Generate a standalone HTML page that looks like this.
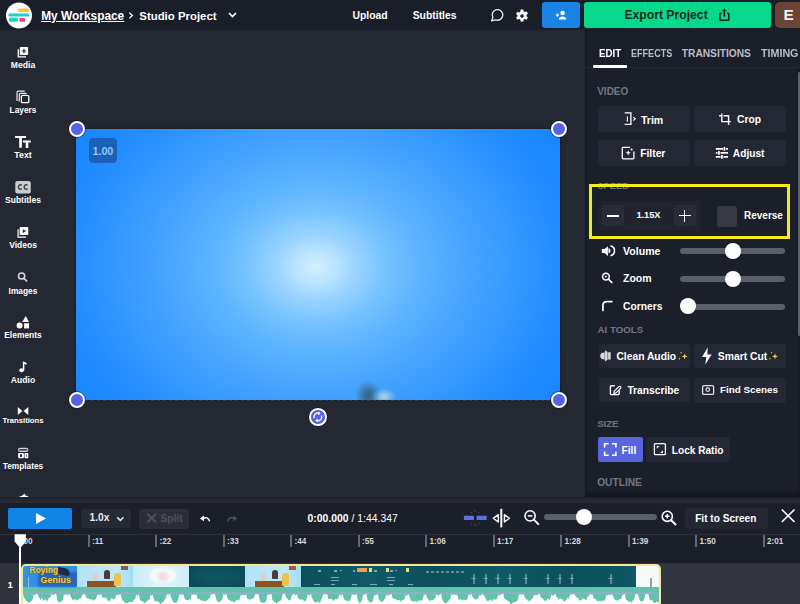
<!DOCTYPE html>
<html><head><meta charset="utf-8">
<style>
*{margin:0;padding:0;box-sizing:border-box}
html,body{width:800px;height:604px;overflow:hidden;background:#242833;font-family:"Liberation Sans",sans-serif;color:#fff}
.abs{position:absolute}
#hdr{left:0;top:0;width:800px;height:30px;background:#1a1e29}
.t{position:absolute;white-space:nowrap;font-weight:bold;line-height:1}
#side{left:0;top:30px;width:46px;height:470px}
.si{position:absolute;left:0;width:46px;text-align:center;font-size:9px;font-weight:bold;color:#fff;line-height:1;white-space:nowrap}
#canvas{left:76px;top:129px;width:484px;height:271px;box-shadow:0 0 0 1.5px #1c2029;background:radial-gradient(ellipse 300px 240px at 240px 138px,#d4f0ff 0%,#bce5ff 6%,#9cd5ff 13%,#78c3ff 23%,#5cb3ff 35%,#46a4ff 52%,#2f95ff 70%,#1f89ff 86%,#1884ff 100%)}
.hd{position:absolute;width:16px;height:16px;border-radius:50%;background:#5862e4;border:2px solid #fff;box-shadow:0 0 0 1px rgba(10,12,20,.45)}
#rp{left:585px;top:30px;width:215px;height:467px;background:#1b1f2a}
.btn{position:absolute;background:#242834;border-radius:3px}
.lbl{position:absolute;font-size:10.5px;font-weight:bold;color:#737782;line-height:1;white-space:nowrap}
#tb{left:0;top:503px;width:800px;height:31px;background:#1b1f2a}
#ruler{left:0;top:534px;width:800px;height:29px;background:#1b1f2a}
#track{left:0;top:563px;width:800px;height:41px;background:#32353f}
</style></head><body>
<div id="hdr" class="abs">
  <svg class="abs" style="left:5px;top:2px" width="28" height="27" viewBox="0 0 28 27">
    <circle cx="14" cy="13.5" r="13" fill="#fff"/>
    <rect x="13.2" y="6.6" width="11" height="3.4" rx=".8" fill="#f6c343"/>
    <rect x="3.5" y="11.6" width="20.7" height="3" rx=".8" fill="#1ecfc9"/>
    <rect x="4.2" y="15.8" width="8.6" height="4" rx=".8" fill="#1ecfc9"/>
    <rect x="14.5" y="16.1" width="5.5" height="3.7" rx=".8" fill="#ec3f77"/>
  </svg>
  <div class="t" style="left:41.2px;top:11px;font-size:11.9px;text-decoration:underline">My Workspace</div>
  <svg class="abs" style="left:127px;top:11px" width="8" height="9" viewBox="0 0 8 9"><path d="M2.3 1.6L5.4 4.5L2.3 7.4" stroke="#fff" stroke-width="1.3" fill="none"/></svg>
  <div class="t" style="left:139.3px;top:10.6px;font-size:11.4px">Studio Project</div>
  <svg class="abs" style="left:228px;top:12px" width="9" height="6" viewBox="0 0 9 6"><path d="M1 1l3.5 3.5L8 1" stroke="#fff" stroke-width="1.6" fill="none"/></svg>
  <div class="t" style="left:352.5px;top:11px;font-size:10.35px">Upload</div>
  <div class="t" style="left:412.7px;top:11px;font-size:10.4px">Subtitles</div>
  <div class="abs" style="left:542px;top:2px;width:38px;height:26px;background:#1a83e3;border-radius:3px"></div>
  <div class="abs" style="left:584px;top:2px;width:187px;height:26px;background:#06d98b;border-radius:3px"></div>
  <div class="t" style="left:624.4px;top:8.8px;font-size:12.2px;color:#0d2a1c">Export Project</div>
  <svg class="abs" style="left:489px;top:7px" width="17" height="17" viewBox="0 0 17 17"><path d="M2.6 13.8 L3.91 10.55 A5.3 5.3 0 1 1 6.51 12.81 Z" fill="none" stroke="#e6e8ec" stroke-width="1.3" stroke-linejoin="round"/></svg>
  <svg class="abs" style="left:514px;top:7.5px" width="16" height="16" viewBox="0 0 16 16"><path fill="#fff" fill-rule="evenodd" d="M6.7 1.6h2.6l.4 1.9 1.1.6 1.8-.7 1.3 2.2-1.4 1.3v1.3l1.4 1.3-1.3 2.2-1.8-.7-1.1.6-.4 1.9H6.7l-.4-1.9-1.1-.6-1.8.7-1.3-2.2 1.4-1.3V7.2L2.1 5.9l1.3-2.2 1.8.7 1.1-.6zM8 6.3a1.8 1.8 0 1 0 0 3.6 1.8 1.8 0 0 0 0-3.6z"/></svg>
  <svg class="abs" style="left:554px;top:9px" width="16" height="12" viewBox="0 0 16 12"><circle cx="8.6" cy="4" r="2.3" fill="#fff"/><path d="M4.9 10.4c0-1.9 1.7-3 3.7-3s3.7 1.1 3.7 3z" fill="#fff"/><path d="M3.5 4.5v3.2M1.9 6.1h3.2" stroke="#fff" stroke-width="1.3"/></svg>
  <svg class="abs" style="left:717px;top:6px" width="14" height="16" viewBox="0 0 14 16"><path d="M4.6 7.4H3.6Q2.9 7.4 2.9 8.1V13.6Q2.9 14.3 3.6 14.3H11.1Q11.8 14.3 11.8 13.6V8.1Q11.8 7.4 11.1 7.4H10.1M7.35 10.6V4" fill="none" stroke="#0c2417" stroke-width="1.6"/><path d="M4.9 5.2L7.35 2.5L9.8 5.2Z" fill="#0c2417"/></svg>
  <div class="abs" style="left:775.3px;top:2.2px;width:30px;height:25.6px;background:#6a4535;border-radius:5px"></div>
  <div class="t" style="left:783.4px;top:6.9px;font-size:15.4px;color:#f3eeea">E</div>
</div>

<div id="canvas" class="abs">
  <div class="abs" style="left:13px;top:9px;width:28px;height:25px;background:#1a61b9;border-radius:4px"></div>
  <div class="t" style="left:16.5px;top:17.2px;font-size:10.7px;color:#93c6f5">1.00</div>
</div>
<div class="abs" style="left:76px;top:129px;width:484px;height:271px;overflow:hidden">
<div class="abs" style="left:278px;top:248px;width:26px;height:30px;background:radial-gradient(ellipse 50% 50% at 55% 62%,rgba(52,82,105,.9),rgba(60,100,135,.55) 55%,rgba(80,140,200,0) 100%);filter:blur(1.2px)"></div>
<div class="abs" style="left:296px;top:254px;width:24px;height:18px;background:radial-gradient(ellipse 50% 45% at 50% 75%,rgba(215,230,205,.85),rgba(190,220,230,.35) 60%,rgba(150,200,240,0) 100%);filter:blur(1px)"></div>
</div>
<div class="abs" style="left:76px;top:399.5px;width:484px;height:1.5px;background:repeating-linear-gradient(90deg,#1a2330 0 3px,#2f3a48 3px 6px)"></div>
<div class="hd" style="left:68.6px;top:120.6px"></div>
<div class="hd" style="left:551.3px;top:120.6px"></div>
<div class="hd" style="left:68.6px;top:391.9px"></div>
<div class="hd" style="left:551.3px;top:391.9px"></div>
<div class="hd" style="left:309.2px;top:408.2px;width:17.4px;height:17.4px;border-width:2px"></div>

<div id="rp" class="abs">
  <div class="abs" style="left:0;top:0;width:2px;height:467px;background:#161a23"></div>
  <div class="abs" style="left:0;top:37px;width:215px;height:1px;background:#232732"></div>
  <div class="t" style="left:14px;top:18.9px;font-size:10.2px;transform:scaleX(.96);transform-origin:0 0">EDIT</div>
  <div class="abs" style="left:8px;top:34.5px;width:34px;height:3px;background:#fff;border-radius:1px"></div>
  <div class="t" style="left:46.2px;top:18.9px;font-size:10.2px;color:#b9bdc6;transform:scaleX(.89);transform-origin:0 0">EFFECTS</div>
  <div class="t" style="left:96.8px;top:18.9px;font-size:10.2px;color:#b9bdc6">TRANSITIONS</div>
  <div class="t" style="left:175.6px;top:18.9px;font-size:10.2px;color:#b9bdc6;transform:scaleX(1.05);transform-origin:0 0">TIMING</div>
  <div class="abs" style="left:211.5px;top:38px;width:3.5px;height:429px;background:#181b25"></div>
  <div class="abs" style="left:213.3px;top:42px;width:1.7px;height:264px;background:#5c606a;border-radius:1px"></div>

  <div class="lbl" style="left:12.2px;top:57.1px;font-size:10px">VIDEO</div>
  <div class="btn" style="left:13px;top:76px;width:92px;height:26px"></div>
  <div class="btn" style="left:109px;top:76px;width:92px;height:26px"></div>
  <div class="btn" style="left:13px;top:110px;width:92px;height:26px"></div>
  <div class="btn" style="left:109px;top:110px;width:92px;height:26px"></div>
  <div class="t" style="left:55.89999999999998px;top:85.3px;font-size:10.6px">Trim</div>
  <div class="t" style="left:152.0px;top:85.3px;font-size:10.3px">Crop</div>
  <div class="t" style="left:55.200000000000045px;top:119.4px;font-size:10.3px">Filter</div>
  <div class="t" style="left:147.79999999999995px;top:119.4px;font-size:10.2px">Adjust</div>

  <div class="lbl" style="left:12.4px;top:152px;font-size:9.3px">SPEED</div>
  <div class="abs" style="left:13.5px;top:170.5px;width:101px;height:30px;background:#21242e;border-radius:3px"></div>
  <div class="abs" style="left:16.5px;top:175px;width:22px;height:21px;background:#292c36;border-radius:3px"></div>
  <div class="abs" style="left:88.5px;top:175px;width:22px;height:21px;background:#292c36;border-radius:3px"></div>
  <div class="abs" style="left:21.5px;top:184.5px;width:12px;height:2px;background:#fff"></div>
  <div class="abs" style="left:93.5px;top:184.6px;width:12px;height:1.9px;background:#fff"></div>
  <div class="abs" style="left:98.55px;top:179.6px;width:1.9px;height:12px;background:#fff"></div>
  <div class="t" style="left:51.4px;top:181.4px;font-size:9.2px">1.15X</div>
  <div class="abs" style="left:132px;top:175.5px;width:20px;height:21px;background:#373a45;border-radius:3px"></div>
  <div class="t" style="left:159.0px;top:180.9px;font-size:10px">Reverse</div>
  <div class="abs" style="left:4px;top:154px;width:201px;height:55px;border:3px solid #f5ec1c"></div>

  <div class="t" style="left:38.0px;top:215.9px;font-size:10.6px">Volume</div>
  <div class="t" style="left:38.0px;top:243px;font-size:10.5px">Zoom</div>
  <div class="t" style="left:38.0px;top:271.6px;font-size:10.3px">Corners</div>
  <div class="abs" style="left:95px;top:218px;width:105px;height:6px;background:#5b5f6b;border-radius:3px"></div>
  <div class="abs" style="left:95px;top:245.5px;width:105px;height:6px;background:#5b5f6b;border-radius:3px"></div>
  <div class="abs" style="left:95px;top:273.5px;width:105px;height:6px;background:#5b5f6b;border-radius:3px"></div>
  <div class="abs" style="left:139.6px;top:213.4px;width:16px;height:16px;background:#fff;border-radius:50%"></div>
  <div class="abs" style="left:139.6px;top:240.6px;width:16px;height:16px;background:#fff;border-radius:50%"></div>
  <div class="abs" style="left:94.6px;top:267.9px;width:16px;height:16px;background:#fff;border-radius:50%"></div>

  <div class="lbl" style="left:12.6px;top:294.9px;font-size:9.7px">AI TOOLS</div>
  <div class="btn" style="left:13.5px;top:314px;width:91.5px;height:24px"></div>
  <div class="btn" style="left:109px;top:313.5px;width:91.5px;height:24.5px"></div>
  <div class="btn" style="left:13.5px;top:348px;width:91.5px;height:24px"></div>
  <div class="btn" style="left:109px;top:347.5px;width:91.5px;height:25px"></div>
  <div class="t" style="left:31.399999999999977px;top:321.8px;font-size:10.3px">Clean Audio</div>
  <div class="t" style="left:132.79999999999995px;top:322.3px;font-size:10.35px">Smart Cut</div>
  <div class="t" style="left:42.39999999999998px;top:355.6px;font-size:10.26px">Transcribe</div>
  <div class="t" style="left:134.89999999999998px;top:354.8px;font-size:9.9px">Find Scenes</div>

  <div class="lbl" style="left:12.2px;top:389.2px;font-size:9.6px">SIZE</div>
  <div class="abs" style="left:12.5px;top:407px;width:45.5px;height:25px;background:#5865df;border-radius:2px"></div>
  <div class="btn" style="left:61.3px;top:407px;width:83.5px;height:25px"></div>
  <div class="t" style="left:36.5px;top:415.5px;font-size:10.2px">Fill</div>
  <div class="t" style="left:86.79999999999995px;top:415.5px;font-size:10.1px">Lock Ratio</div>
  <div class="lbl" style="left:12.2px;top:448.4px;font-size:10.2px">OUTLINE</div>
  <div class="abs" style="left:0;top:459px;width:215px;height:8px;background:linear-gradient(rgba(18,20,27,0),#11141b)"></div>
</div>
<div id="side" class="abs" style="top:0;height:500px">
  <svg class="abs" style="left:0;top:0" width="46" height="500" viewBox="0 0 46 500">
    <g fill="#fff">
      <path d="M18.3 49.2V56.9H26" fill="none" stroke="#fff" stroke-width="1.3"/>
      <rect x="19.8" y="46.9" width="8.3" height="8.2" rx="1"/>
      <path d="M23.95 48.7v4.6M21.65 51h4.6" stroke="#242833" stroke-width="1.2"/>
      <path d="M17 101V92.5Q17 91.2 18.3 91.2H24.8" fill="none" stroke="#e8e9ec" stroke-width="1.2"/>
      <path d="M19.3 101.5V94.6Q19.3 93.4 20.5 93.4H26.5" fill="none" stroke="#e8e9ec" stroke-width="1.2"/>
      <rect x="21.4" y="95.4" width="7.4" height="7.2" rx="1.2" fill="#242833" stroke="#fff" stroke-width="1.3"/>
      <path d="M15 135.9H26V138.1H21.9V147.8H19.2V138.1H15Z"/>
      <path d="M23 140.4H30.8V142.4H28.3V148.1H25.7V142.4H23Z"/>
      <rect x="15.3" y="180.9" width="15.5" height="12.5" rx="2" fill="#c9ccd1"/>
      <path d="M21.9 185.2A2.2 2.2 0 1 0 21.9 188.8M27.6 185.2A2.2 2.2 0 1 0 27.6 188.8" fill="none" stroke="#3a3d45" stroke-width="1.4"/>
      <path d="M18.1 229.2V237.2H26" fill="none" stroke="#fff" stroke-width="1.2"/>
      <rect x="19.6" y="227.1" width="8.7" height="8" rx="1"/>
      <path d="M22.9 229.3L26.1 231.1L22.9 232.9Z" fill="#242833"/>
      <circle cx="21.6" cy="276" r="3.1" fill="none" stroke="#d8dade" stroke-width="1.5"/>
      <path d="M23.8 278.2L26.6 281" stroke="#d8dade" stroke-width="1.7" stroke-linecap="round"/>
      <path d="M25.7 315.9L29 321.9H22.3Z"/>
      <circle cx="19.6" cy="325.4" r="3"/>
      <rect x="24.1" y="323.3" width="4.9" height="5.1"/>
      <path d="M23.6 370.3V362.4Q25.7 362.9 26.4 364.3" fill="none" stroke="#fff" stroke-width="1.5"/>
      <ellipse cx="21.5" cy="370.2" rx="2.3" ry="2"/>
      <path d="M17.8 406.9L22.4 410.9L17.8 414.9Z"/>
      <path d="M28.3 406.9L23.7 410.9L28.3 414.9Z"/>
      <rect x="18.6" y="448.4" width="9.2" height="3" rx="1.4" fill="#454852" stroke="#d0d3d8" stroke-width="1.1"/>
      <rect x="18.1" y="452.9" width="5.8" height="5.4" rx="1"/><rect x="19.9" y="454.3" width="2.2" height="2.6" fill="#242833"/>
      <rect x="24.5" y="452.9" width="3.8" height="5.4" rx=".8"/><rect x="25.9" y="454.3" width="1" height="2.6" fill="#6a6d75"/>
      <path d="M17.2 498.6Q19.5 496.3 22.5 495.6L24.4 493.5L25.6 495.6L28.9 496.4L25.2 497.6L24.8 498.8H18Z"/>
    </g>
  </svg>
  <div class="si" style="top:61.1px;font-size:8.6px">Media</div>
  <div class="si" style="top:105.8px;font-size:8.3px">Layers</div>
  <div class="si" style="top:150.6px;font-size:8.8px">Text</div>
  <div class="si" style="top:195.8px;font-size:8.5px">Subtitles</div>
  <div class="si" style="top:240.9px;font-size:8.5px">Videos</div>
  <div class="si" style="top:286.5px;font-size:8.4px">Images</div>
  <div class="si" style="top:331.3px;font-size:8.45px">Elements</div>
  <div class="si" style="top:375.7px;font-size:8.6px">Audio</div>
  <div class="si" style="top:417.1px;font-size:7.7px">Transitions</div>
  <div class="si" style="top:462.1px;font-size:8.3px">Templates</div>
</div>
<div class="abs" style="left:0;top:497px;width:800px;height:1.5px;background:#1f222b"></div>
<div class="abs" style="left:0;top:498.5px;width:800px;height:4.5px;background:#272a34"></div>
<div id="tb" class="abs">
  <div class="abs" style="left:7.5px;top:4.8px;width:64.5px;height:21.2px;background:#1184e6;border-radius:2px"></div>
  <svg class="abs" style="left:35px;top:9px" width="12" height="13" viewBox="0 0 12 13"><path d="M1 1L11 6.5L1 12Z" fill="#fff"/></svg>
  <div class="abs" style="left:80.5px;top:6px;width:50px;height:19px;background:#262a35;border-radius:3px"></div>
  <div class="t" style="left:89.6px;top:10px;font-size:10.2px;color:#e8e9ec">1.0x</div>
  <svg class="abs" style="left:116px;top:515px" width="8" height="5"></svg>
  <div class="abs" style="left:139px;top:6px;width:50px;height:19.5px;background:#2b2e37;border-radius:3px"></div>
  <div class="t" style="left:160.3px;top:10.5px;font-size:10.3px;color:#4d515b">Split</div>
  <div class="t" style="left:307.6px;top:11.1px;font-size:10.4px">0:00.000 <span style="font-weight:normal">/ 1:44.347</span></div>
  <div class="abs" style="left:544px;top:11px;width:113px;height:5.5px;background:#5b5f6b;border-radius:3px"></div>
  <div class="abs" style="left:576px;top:6.3px;width:16px;height:16px;background:#fff;border-radius:50%"></div>
  <div class="abs" style="left:685px;top:5.2px;width:83px;height:20.5px;background:#242731;border-radius:3px"></div>
  <div class="t" style="left:695.2px;top:11px;font-size:10.1px">Fit to Screen</div>
</div>
<div id="ruler" class="abs">
  <div class="abs" style="left:0;top:0;width:800px;height:1px;background:#2e313b"></div>
  <div class="t" style="left:20.8px;top:3.6px;font-size:8.2px;color:#d3d6db">:00</div>
  <div class="abs" style="left:87.80px;top:0.5px;width:1.8px;height:12.5px;background:#646873"></div>
  <div class="t" style="left:92.00px;top:3.6px;font-size:8.2px;color:#d3d6db">:11</div>
  <div class="abs" style="left:155.30px;top:0.5px;width:1.8px;height:12.5px;background:#646873"></div>
  <div class="t" style="left:159.50px;top:3.6px;font-size:8.2px;color:#d3d6db">:22</div>
  <div class="abs" style="left:222.80px;top:0.5px;width:1.8px;height:12.5px;background:#646873"></div>
  <div class="t" style="left:227.00px;top:3.6px;font-size:8.2px;color:#d3d6db">:33</div>
  <div class="abs" style="left:290.30px;top:0.5px;width:1.8px;height:12.5px;background:#646873"></div>
  <div class="t" style="left:294.50px;top:3.6px;font-size:8.2px;color:#d3d6db">:44</div>
  <div class="abs" style="left:357.80px;top:0.5px;width:1.8px;height:12.5px;background:#646873"></div>
  <div class="t" style="left:362.00px;top:3.6px;font-size:8.2px;color:#d3d6db">:55</div>
  <div class="abs" style="left:425.30px;top:0.5px;width:1.8px;height:12.5px;background:#646873"></div>
  <div class="t" style="left:429.50px;top:3.6px;font-size:8.2px;color:#d3d6db">1:06</div>
  <div class="abs" style="left:492.80px;top:0.5px;width:1.8px;height:12.5px;background:#646873"></div>
  <div class="t" style="left:497.00px;top:3.6px;font-size:8.2px;color:#d3d6db">1:17</div>
  <div class="abs" style="left:560.30px;top:0.5px;width:1.8px;height:12.5px;background:#646873"></div>
  <div class="t" style="left:564.50px;top:3.6px;font-size:8.2px;color:#d3d6db">1:28</div>
  <div class="abs" style="left:627.80px;top:0.5px;width:1.8px;height:12.5px;background:#646873"></div>
  <div class="t" style="left:632.00px;top:3.6px;font-size:8.2px;color:#d3d6db">1:39</div>
  <div class="abs" style="left:695.30px;top:0.5px;width:1.8px;height:12.5px;background:#646873"></div>
  <div class="t" style="left:699.50px;top:3.6px;font-size:8.2px;color:#d3d6db">1:50</div>
  <div class="abs" style="left:762.80px;top:0.5px;width:1.8px;height:12.5px;background:#646873"></div>
  <div class="t" style="left:767.00px;top:3.6px;font-size:8.2px;color:#d3d6db">2:01</div>
</div>
<div id="track" class="abs">
  <div class="abs" style="left:0;top:0;width:19px;height:41px;background:#30333c"></div>
  <div class="t" style="left:7.4px;top:16.9px;font-size:9.7px">1</div>
  <div class="abs" style="left:20.5px;top:0.5px;width:640px;height:48px;border:2px solid #f3e69a;border-radius:5px;overflow:hidden;background:#63c2ad">
    <div class="abs" style="left:0;top:0;width:56px;height:21px;background:#3391e4"></div>
    <div class="abs" style="left:15px;top:6px;width:40px;height:15px;background:#2566c4;border-radius:3px;filter:blur(1px)"></div>
    <div class="abs" style="left:34px;top:2px;width:13px;height:7px;background:#1f2a44;border-radius:1px 6px 2px 4px;transform:rotate(12deg)"></div>
    <div class="t" style="left:7px;top:0px;font-size:8.5px;color:#f3d24c;text-shadow:0 0 1px #6b4a12,0 0 1px #6b4a12">Roying</div>
    <div class="t" style="left:18px;top:10px;font-size:9px;color:#f3d24c;text-shadow:0 0 1px #6b4a12,0 0 1px #6b4a12">Genius</div>
    <div class="abs" style="left:5px;top:11px;width:1.5px;height:10px;background:#d8d0b8;opacity:.7"></div>
    <div class="abs" style="left:54.1px;top:0;width:56.5px;height:21px;background:linear-gradient(90deg,#b2e2f4,#bfe8f6 70%,#a2def0)"></div>
    <div class="abs" style="left:64.5px;top:15.5px;width:29px;height:6px;background:#8a5426"></div>
    <div class="abs" style="left:70.5px;top:7.5px;width:5px;height:8px;background:#e8cdbd;border-radius:2px"></div>
    <div class="abs" style="left:81.5px;top:4.5px;width:6px;height:9px;background:#4a3a38;border-radius:3px 3px 1px 1px"></div>
    <div class="abs" style="left:91.5px;top:7.5px;width:7px;height:13px;background:#eec24a;border-radius:3px 3px 1px 1px"></div>
    <div class="abs" style="left:98.5px;top:0.5px;width:7px;height:3.5px;background:#7a6050"></div>
    <div class="abs" style="left:110.6px;top:0;width:56px;height:21px;background:linear-gradient(90deg,#c8ecf8,#e4f5fb 50%,#cdeef9)"></div>
    <div class="abs" style="left:127.5px;top:3.5px;width:26px;height:13px;background:#f3f8fa;border-radius:7px;opacity:.9"></div>
    <div class="abs" style="left:135.5px;top:6.5px;width:10px;height:9px;background:#f6dde3;border-radius:4px;filter:blur(1px)"></div>
    <div class="abs" style="left:166.5px;top:0;width:56px;height:21px;background:radial-gradient(ellipse at 50% 50%,#0f5866,#0b4855)"></div>
    <div class="abs" style="left:222.5px;top:0;width:56px;height:21px;background:linear-gradient(90deg,#b2e2f4,#bfe8f6 70%,#a2def0)"></div>
    <div class="abs" style="left:232.5px;top:15.5px;width:29px;height:6px;background:#8a5426"></div>
    <div class="abs" style="left:238.5px;top:7.5px;width:5px;height:8px;background:#e8cdbd;border-radius:2px"></div>
    <div class="abs" style="left:249.5px;top:4.5px;width:6px;height:9px;background:#4a3a38;border-radius:3px 3px 1px 1px"></div>
    <div class="abs" style="left:259.5px;top:7.5px;width:7px;height:13px;background:#eec24a;border-radius:3px 3px 1px 1px"></div>
    <div class="abs" style="left:266.5px;top:0.5px;width:7px;height:3.5px;background:#a05a40"></div>
    <div class="abs" style="left:278.5px;top:0;width:335px;height:21px;background:linear-gradient(90deg,#0b4f5c,#0f5a68 20%,#0c4f5c 40%,#0f5a68 60%,#0b4f5c 80%,#0f5866)"></div>
    <div class="abs" style="left:334.5px;top:2.5px;width:10px;height:3.5px;background:#e8a050"></div>
    <div class="abs" style="left:346.5px;top:2.5px;width:2.5px;height:4px;background:#e8e070"></div>
    <div class="abs" style="left:363.5px;top:2.5px;width:2.5px;height:4px;background:#e8e070"></div>
    <div class="abs" style="left:383.5px;top:2.5px;width:2.5px;height:4px;background:#e8e070"></div>
    <div class="abs" style="left:295.5px;top:4.5px;width:3px;height:1.5px;background:#d8eee8;opacity:.55"></div><div class="abs" style="left:311.5px;top:4.5px;width:3px;height:1.5px;background:#d8eee8;opacity:.55"></div><div class="abs" style="left:330.5px;top:4.5px;width:2px;height:1.5px;background:#d8eee8;opacity:.55"></div><div class="abs" style="left:351.5px;top:4.5px;width:3px;height:1.5px;background:#d8eee8;opacity:.55"></div><div class="abs" style="left:367.5px;top:4.5px;width:3px;height:1.5px;background:#d8eee8;opacity:.55"></div><div class="abs" style="left:317.5px;top:4.5px;width:1.5px;height:1px;background:#d8eee8;opacity:.55"></div><div class="abs" style="left:372.5px;top:4.5px;width:1.5px;height:1px;background:#d8eee8;opacity:.55"></div><div class="abs" style="left:308.5px;top:11.5px;width:8px;height:1.2px;background:#d8eee8;opacity:.55"></div><div class="abs" style="left:308.5px;top:14.0px;width:8px;height:1.2px;background:#d8eee8;opacity:.55"></div><div class="abs" style="left:364.5px;top:11.5px;width:8px;height:1.2px;background:#d8eee8;opacity:.55"></div><div class="abs" style="left:364.5px;top:14.0px;width:8px;height:1.2px;background:#d8eee8;opacity:.55"></div><div class="abs" style="left:291.5px;top:18.5px;width:6px;height:1.2px;background:#d8eee8;opacity:.55"></div><div class="abs" style="left:308.5px;top:18.5px;width:4px;height:1.2px;background:#d8eee8;opacity:.55"></div><div class="abs" style="left:329.5px;top:18.5px;width:5px;height:1.2px;background:#d8eee8;opacity:.55"></div><div class="abs" style="left:347.5px;top:18.5px;width:7px;height:1.2px;background:#d8eee8;opacity:.55"></div><div class="abs" style="left:366.5px;top:18.5px;width:4px;height:1.2px;background:#d8eee8;opacity:.55"></div><div class="abs" style="left:385.5px;top:18.5px;width:5px;height:1.2px;background:#d8eee8;opacity:.55"></div><div class="abs" style="left:403.5px;top:5.5px;width:2.5px;height:1.5px;background:#d8eee8;opacity:.4"></div><div class="abs" style="left:408.5px;top:5.5px;width:2.5px;height:1.5px;background:#d8eee8;opacity:.4"></div><div class="abs" style="left:413.5px;top:5.5px;width:2.5px;height:1.5px;background:#d8eee8;opacity:.4"></div><div class="abs" style="left:418.5px;top:5.5px;width:2.5px;height:1.5px;background:#d8eee8;opacity:.4"></div><div class="abs" style="left:423.5px;top:5.5px;width:2.5px;height:1.5px;background:#d8eee8;opacity:.4"></div><div class="abs" style="left:428.5px;top:5.5px;width:2.5px;height:1.5px;background:#d8eee8;opacity:.4"></div><div class="abs" style="left:433.5px;top:5.5px;width:2.5px;height:1.5px;background:#d8eee8;opacity:.4"></div><div class="abs" style="left:438.5px;top:5.5px;width:2.5px;height:1.5px;background:#d8eee8;opacity:.4"></div><div class="abs" style="left:450.5px;top:8.5px;width:1.5px;height:10px;background:#e0f2ee;opacity:.35"></div><div class="abs" style="left:448.5px;top:12.5px;width:5px;height:1.3px;background:#e0f2ee;opacity:.35"></div><div class="abs" style="left:462.5px;top:8.5px;width:1.5px;height:10px;background:#e0f2ee;opacity:.35"></div><div class="abs" style="left:460.5px;top:12.5px;width:5px;height:1.3px;background:#e0f2ee;opacity:.35"></div><div class="abs" style="left:474.5px;top:8.5px;width:1.5px;height:10px;background:#e0f2ee;opacity:.35"></div><div class="abs" style="left:472.5px;top:12.5px;width:5px;height:1.3px;background:#e0f2ee;opacity:.35"></div><div class="abs" style="left:486.5px;top:8.5px;width:1.5px;height:10px;background:#e0f2ee;opacity:.35"></div><div class="abs" style="left:484.5px;top:12.5px;width:5px;height:1.3px;background:#e0f2ee;opacity:.35"></div><div class="abs" style="left:502.5px;top:8.5px;width:1.5px;height:10px;background:#e0f2ee;opacity:.35"></div><div class="abs" style="left:500.5px;top:12.5px;width:5px;height:1.3px;background:#e0f2ee;opacity:.35"></div><div class="abs" style="left:524.5px;top:8.5px;width:1.5px;height:10px;background:#e0f2ee;opacity:.35"></div><div class="abs" style="left:522.5px;top:12.5px;width:5px;height:1.3px;background:#e0f2ee;opacity:.35"></div><div class="abs" style="left:536.5px;top:8.5px;width:1.5px;height:10px;background:#e0f2ee;opacity:.35"></div><div class="abs" style="left:534.5px;top:12.5px;width:5px;height:1.3px;background:#e0f2ee;opacity:.35"></div><div class="abs" style="left:548.5px;top:8.5px;width:1.5px;height:10px;background:#e0f2ee;opacity:.35"></div><div class="abs" style="left:546.5px;top:12.5px;width:5px;height:1.3px;background:#e0f2ee;opacity:.35"></div><div class="abs" style="left:587.5px;top:8.5px;width:1.5px;height:10px;background:#e0f2ee;opacity:.35"></div><div class="abs" style="left:585.5px;top:12.5px;width:5px;height:1.3px;background:#e0f2ee;opacity:.35"></div>
    <div class="abs" style="left:613.5px;top:0;width:27px;height:21px;background:#f6f9f9"></div>
    <div class="abs" style="left:627.5px;top:12.5px;width:1.5px;height:12px;background:#9aa0a0"></div>
    <svg class="abs" style="left:0;top:22.5px" width="637" height="20" viewBox="0 0 637 20">
      <rect x="0" y="5.5" width="637" height="15" fill="#ffffff"/>
      <rect x="0" y="4.6" width="637" height="1.4" fill="#c396e0"/>
      <path transform="translate(0 5.7)" d="M0.0 0 L0.0 0.3 L1.1 4.3 L2.1 5.3 L3.2 7.3 L4.3 7.5 L5.4 9.2 L6.4 8.7 L7.5 8.0 L8.6 7.0 L9.7 5.8 L10.7 0.3 L10.7 0.5 L12.0 1.8 L13.3 0.3 L14.5 0.3 L15.5 3.0 L16.5 4.3 L17.5 6.3 L18.6 4.3 L19.6 4.7 L20.6 7.4 L21.6 6.3 L22.6 5.0 L23.6 7.5 L24.6 7.0 L25.7 4.1 L26.7 4.3 L27.7 2.4 L28.7 0.3 L28.7 0.5 L30.2 1.5 L31.7 0.3 L33.2 0.3 L34.3 6.2 L35.4 8.4 L36.5 8.7 L37.6 8.4 L38.7 6.7 L39.8 7.2 L40.9 0.9 L40.9 1.4 L42.4 0.8 L43.8 0.9 L45.3 1.4 L46.8 0.3 L47.9 3.4 L48.9 4.9 L50.0 6.5 L51.0 6.1 L52.1 4.9 L53.2 7.4 L54.2 6.1 L55.3 6.1 L56.4 4.8 L57.4 4.7 L58.5 3.5 L59.5 0.3 L59.5 1.2 L60.7 0.5 L61.9 0.3 L63.0 3.2 L64.1 5.1 L65.2 4.0 L66.3 5.7 L67.3 5.2 L68.4 5.5 L69.5 6.0 L70.6 7.2 L71.7 5.3 L72.7 6.1 L73.8 2.6 L74.9 0.8 L74.9 0.5 L76.6 1.5 L78.4 0.3 L79.4 4.1 L80.4 3.8 L81.4 4.1 L82.4 3.9 L83.4 4.3 L84.4 6.3 L85.4 7.5 L86.4 7.5 L87.4 5.9 L88.4 4.3 L89.4 4.8 L90.5 5.8 L91.5 5.3 L92.5 3.7 L93.5 0.3 L93.5 1.1 L94.9 1.3 L96.2 0.7 L97.6 0.3 L98.6 4.4 L99.7 7.6 L100.7 6.8 L101.7 9.5 L102.7 8.7 L103.8 9.6 L104.8 9.7 L105.8 8.3 L106.9 8.3 L107.9 7.9 L108.9 8.7 L110.0 8.1 L111.0 5.4 L112.0 6.2 L113.1 0.3 L113.1 1.0 L114.5 2.0 L116.0 0.8 L117.1 6.5 L118.1 7.3 L119.2 7.1 L120.2 8.2 L121.3 9.4 L122.3 9.0 L123.4 8.1 L124.5 6.9 L125.5 6.1 L126.6 5.8 L127.6 0.3 L127.6 1.5 L128.7 1.8 L129.7 0.7 L130.8 5.4 L131.8 7.7 L132.9 7.5 L134.0 7.3 L135.1 8.5 L136.1 8.6 L137.2 10.4 L138.3 9.5 L139.4 8.6 L140.4 8.2 L141.5 5.7 L142.6 5.4 L143.7 0.3 L143.7 0.6 L145.5 0.9 L147.2 0.3 L148.3 4.4 L149.3 6.6 L150.3 8.5 L151.3 9.1 L152.4 8.8 L153.4 9.3 L154.4 6.7 L155.5 4.2 L156.5 0.3 L156.5 0.5 L157.7 1.4 L159.0 0.8 L160.3 0.8 L161.3 3.5 L162.4 5.9 L163.4 6.3 L164.4 6.3 L165.5 6.7 L166.5 5.4 L167.6 6.2 L168.6 0.3 L168.6 0.5 L170.2 1.0 L171.8 1.3 L173.4 0.3 L174.5 4.9 L175.5 6.0 L176.5 4.9 L177.6 6.4 L178.6 7.4 L179.6 6.5 L180.6 7.4 L181.7 7.3 L182.7 8.0 L183.7 6.4 L184.8 6.3 L185.8 4.6 L186.8 4.6 L187.9 0.3 L187.9 0.8 L189.2 0.8 L190.5 0.4 L191.9 0.3 L192.9 4.1 L193.9 7.9 L195.0 7.0 L196.0 9.2 L197.0 8.0 L198.1 6.6 L199.1 6.6 L200.1 0.7 L200.1 0.4 L201.8 1.4 L203.4 0.4 L204.4 4.3 L205.5 6.3 L206.5 6.1 L207.5 7.1 L208.6 7.5 L209.6 7.7 L210.6 7.8 L211.6 9.0 L212.7 6.8 L213.7 6.5 L214.7 6.1 L215.8 7.4 L216.8 4.7 L217.8 0.3 L217.8 1.8 L219.2 1.7 L220.5 0.8 L221.8 1.5 L223.2 0.6 L224.2 5.3 L225.2 4.6 L226.2 7.3 L227.2 5.0 L228.2 5.9 L229.2 4.7 L230.2 4.5 L231.2 3.3 L232.2 0.3 L232.2 0.5 L233.8 0.5 L235.4 0.3 L236.4 4.8 L237.4 8.2 L238.4 8.7 L239.5 8.8 L240.5 9.0 L241.5 9.0 L242.5 8.6 L243.5 6.1 L244.5 0.3 L244.5 1.3 L245.8 0.9 L247.1 0.9 L248.4 0.3 L249.4 6.6 L250.4 6.7 L251.4 8.7 L252.5 8.8 L253.5 9.8 L254.5 9.0 L255.5 8.0 L256.5 7.4 L257.5 7.1 L258.5 6.0 L259.6 0.5 L259.6 0.3 L260.8 0.4 L262.1 0.3 L263.2 4.0 L264.4 4.7 L265.5 6.8 L266.6 6.2 L267.8 6.2 L268.9 0.9 L268.9 1.9 L270.2 0.3 L271.4 0.6 L272.7 1.9 L273.9 0.3 L275.0 4.1 L276.1 5.6 L277.1 5.7 L278.2 5.8 L279.3 5.5 L280.4 6.9 L281.4 7.6 L282.5 7.0 L283.6 5.1 L284.7 0.8 L284.7 0.7 L286.4 1.9 L288.1 0.3 L289.1 4.2 L290.1 6.4 L291.1 8.0 L292.1 8.9 L293.1 9.0 L294.1 7.9 L295.1 7.9 L296.1 9.0 L297.1 8.8 L298.1 6.4 L299.1 4.1 L300.1 0.3 L300.1 0.9 L301.5 0.6 L302.9 0.9 L304.3 0.3 L305.3 5.2 L306.3 5.7 L307.3 4.9 L308.3 5.9 L309.3 5.2 L310.3 7.2 L311.3 6.8 L312.3 5.1 L313.4 5.8 L314.4 5.2 L315.4 4.1 L316.4 0.3 L316.4 0.8 L318.0 2.0 L319.6 0.3 L320.7 4.2 L321.7 6.3 L322.7 6.5 L323.8 7.2 L324.8 7.3 L325.8 6.9 L326.9 7.9 L327.9 4.6 L328.9 0.3 L328.9 0.9 L330.5 1.1 L332.0 1.4 L333.6 0.3 L334.7 5.7 L335.8 8.8 L336.9 9.8 L338.0 8.4 L339.2 5.5 L340.3 0.3 L340.3 1.7 L341.9 0.6 L343.4 0.3 L344.6 6.3 L345.7 7.4 L346.8 9.5 L348.0 8.0 L349.1 8.8 L350.2 5.7 L351.4 0.3 L351.4 1.5 L353.1 1.6 L354.8 0.3 L355.9 5.5 L356.9 7.4 L358.0 8.0 L359.0 8.5 L360.1 7.2 L361.1 6.3 L362.2 4.0 L363.2 0.7 L363.2 0.9 L364.5 1.9 L365.8 1.8 L367.1 0.5 L368.4 0.3 L369.4 3.5 L370.4 5.2 L371.5 4.9 L372.5 5.5 L373.5 6.0 L374.5 6.8 L375.6 6.4 L376.6 6.3 L377.6 8.2 L378.6 6.5 L379.7 6.2 L380.7 5.8 L381.7 5.5 L382.7 0.3 L382.7 1.7 L384.2 1.8 L385.7 0.3 L386.7 3.4 L387.7 6.8 L388.7 7.2 L389.7 7.2 L390.8 8.3 L391.8 7.0 L392.8 7.9 L393.8 9.1 L394.8 6.5 L395.9 7.8 L396.9 6.1 L397.9 7.4 L398.9 6.6 L400.0 4.8 L401.0 0.3 L401.0 1.1 L402.0 0.8 L403.1 0.8 L404.1 4.1 L405.1 5.3 L406.1 6.8 L407.1 7.3 L408.1 6.4 L409.1 6.3 L410.1 6.8 L411.1 4.7 L412.1 5.2 L413.1 0.3 L413.1 1.1 L414.4 1.3 L415.7 2.0 L416.9 0.6 L418.2 0.3 L419.3 5.7 L420.3 8.1 L421.3 8.7 L422.3 9.7 L423.3 9.2 L424.3 8.2 L425.3 7.5 L426.3 6.0 L427.3 4.5 L428.3 0.3 L428.3 0.5 L429.8 1.3 L431.3 0.4 L432.7 1.9 L434.2 0.5 L435.3 5.2 L436.3 6.7 L437.3 5.1 L438.3 6.1 L439.4 7.1 L440.4 5.9 L441.4 6.6 L442.5 6.6 L443.5 6.0 L444.5 5.0 L445.5 0.3 L445.5 1.6 L447.1 1.0 L448.7 0.3 L449.8 4.0 L450.9 4.3 L452.0 6.0 L453.1 5.8 L454.2 5.0 L455.3 4.6 L456.4 0.3 L456.4 2.0 L457.8 1.8 L459.1 0.7 L460.5 0.8 L461.6 2.7 L462.6 4.6 L463.7 7.2 L464.7 7.0 L465.8 7.4 L466.8 6.1 L467.9 6.0 L468.9 8.4 L470.0 5.5 L471.0 5.5 L472.1 5.7 L473.1 6.1 L474.2 4.5 L475.2 1.0 L475.2 1.0 L476.5 1.8 L477.8 0.8 L479.1 0.3 L480.3 0.3 L481.4 5.0 L482.4 5.6 L483.5 6.6 L484.5 6.8 L485.5 7.4 L486.6 8.9 L487.6 10.3 L488.7 10.4 L489.7 9.0 L490.7 9.1 L491.8 8.0 L492.8 8.3 L493.9 7.1 L494.9 6.5 L495.9 0.5 L495.9 1.3 L497.5 0.5 L499.1 1.0 L500.6 0.3 L501.7 3.9 L502.7 4.4 L503.8 6.4 L504.8 5.9 L505.9 8.0 L506.9 7.0 L508.0 6.1 L509.0 5.1 L510.1 3.8 L511.1 0.3 L511.1 1.8 L512.6 1.4 L514.0 1.4 L515.5 0.5 L517.0 0.3 L518.0 4.3 L519.0 4.2 L520.1 5.1 L521.1 7.0 L522.2 6.5 L523.2 7.7 L524.2 5.3 L525.3 4.7 L526.3 6.5 L527.4 4.4 L528.4 0.3 L528.4 0.5 L529.8 2.0 L531.2 1.1 L532.6 0.3 L533.6 3.7 L534.6 3.9 L535.6 6.4 L536.6 5.1 L537.6 4.9 L538.7 5.4 L539.7 5.8 L540.7 7.8 L541.7 7.5 L542.7 6.7 L543.7 5.6 L544.7 3.9 L545.7 5.6 L546.7 2.4 L547.7 0.3 L547.7 1.8 L549.0 0.5 L550.2 0.3 L551.4 0.3 L552.5 2.2 L553.5 3.7 L554.5 4.0 L555.5 5.2 L556.5 7.0 L557.5 6.9 L558.5 6.1 L559.5 4.8 L560.5 4.9 L561.5 5.1 L562.5 6.3 L563.5 6.2 L564.5 2.8 L565.5 2.8 L566.5 0.9 L566.5 0.3 L567.8 0.7 L569.1 0.3 L570.2 2.7 L571.2 5.5 L572.3 4.8 L573.4 6.6 L574.4 7.4 L575.5 8.0 L576.6 6.7 L577.6 8.3 L578.7 6.4 L579.8 7.7 L580.8 7.0 L581.9 6.5 L583.0 2.7 L584.0 0.3 L584.0 1.8 L585.6 0.7 L587.2 1.6 L588.8 0.3 L589.9 2.3 L591.0 4.1 L592.0 6.8 L593.1 6.4 L594.2 7.1 L595.3 7.1 L596.3 5.2 L597.4 5.5 L598.5 4.3 L599.6 0.3 L599.6 1.8 L600.8 0.5 L601.9 0.3 L603.0 6.4 L604.0 6.3 L605.1 7.2 L606.1 8.9 L607.2 7.0 L608.2 9.4 L609.3 7.2 L610.3 6.6 L611.3 4.8 L612.4 0.3 L612.4 0.4 L613.7 0.3 L615.1 1.0 L616.1 4.5 L617.2 7.4 L618.2 7.7 L619.3 7.5 L620.3 7.0 L621.4 4.8 L622.4 0.3 L622.4 0.3 L623.9 0.4 L625.5 0.9 L626.5 5.6 L627.5 6.8 L628.5 6.2 L629.5 6.5 L630.6 9.5 L631.6 8.9 L632.6 9.2 L633.6 7.4 L634.6 9.2 L635.6 8.2 L636.7 6.4 L637.7 6.1 L638.7 7.5 L639.7 5.1 L640.7 0.3 L637.0 0Z" fill="#63c2ad"/>
    </svg>
  </div>
</div>
<div class="abs" style="left:19.2px;top:547px;width:2px;height:57px;background:#fff"></div>
<svg class="abs" style="left:14px;top:534px" width="13" height="15" viewBox="0 0 13 15"><path d="M0.6 0.3H11.9V7.6L6.25 14V14L0.6 7.6Z" fill="#fff"/></svg>
<svg class="abs" style="left:0;top:0;pointer-events:none" width="800" height="604" viewBox="0 0 800 604">
  <g fill="none" stroke="#fff" stroke-width="1.3">
    <path d="M624.7 112.9H630.9V124.3H624.7"/>
    <path d="M627.4 116.4V121.5" stroke-width="1.2"/>
    <path d="M633.3 117.1L635.3 118.8L633.3 120.5" stroke-width="1.1"/>
    <path d="M719.1 115.7H721.8V121.6H728.6V124.9M721.8 113.4V115.7M723.5 115.8H728.6V121.6H730.8" stroke-width="1.4"/>
    <path d="M630 147.3H623.1Q622.3 147.3 622.3 148.1V158Q622.3 158.8 623.1 158.8H633.1Q633.9 158.8 633.9 158V151.5" stroke-width="1.3"/>
    <path d="M715.8 148.9H723M726 148.9H728M715.8 152.9H717.5M720.5 152.9H728M715.8 156.9H720.5M723.5 156.9H728" stroke-width="1.7"/>
    <path d="M602.9 310.5V305.5Q602.9 301.6 606.8 301.6H611.9" stroke-width="1.7" stroke-linecap="round"/>
    <circle cx="605.9" cy="276.6" r="3.4" stroke-width="1.5"/>
    <path d="M608.5 279.2L611.8 282.5" stroke-width="1.7" stroke-linecap="round"/>
    <path d="M610.5 245.9A5 5 0 0 1 610.5 255.7" stroke-width="1.6"/>
    <path d="M614.8 385.8H611.4Q610.4 385.8 610.4 386.8V393.6Q610.4 394.6 611.4 394.6H618.2Q619.2 394.6 619.2 393.6V390.3" stroke-width="1.4"/>
    <path d="M614.3 391.2L618.9 386.6Q619.6 385.9 620.3 386.6L620.6 386.9Q621.3 387.6 620.6 388.3L616 392.9L613.8 393.5Z" stroke-width="1.2" stroke-linejoin="round"/>
    <rect x="702.6" y="385.6" width="11" height="8.8" rx="1.2" stroke="#dfe1e5" stroke-width="1.3"/>
    <circle cx="707.8" cy="389.6" r="1.8" stroke="#dfe1e5" stroke-width="1.2"/>
    <rect x="654.4" y="443.7" width="11" height="11" rx="1" stroke-width="1.3"/>
    <path d="M604.6 447.6V443.8H608.7M611.9 443.8H615.9V447.6M615.9 451.5V455.2H611.9M608.7 455.2H604.6V451.5" stroke-width="1.6"/>
  </g>
  <g fill="#fff">
    <path d="M628.2 150.2L629 152L630.8 152.8L629 153.6L628.2 155.4L627.4 153.6L625.6 152.8L627.4 152Z"/>
    <circle cx="631.6" cy="149.6" r="1"/>
    <rect x="723.5" y="147" width="1.8" height="3.8" rx=".5"/>
    <rect x="718" y="151" width="1.8" height="3.8" rx=".5"/>
    <rect x="721" y="155" width="1.8" height="3.8" rx=".5"/>
    <path d="M601.8 249.1H604.6L607.9 246.3V255.9L604.6 253.1H601.8Z"/>
    <path d="M608.5 248.1A2.8 2.8 0 0 1 608.5 253.5Z"/>
    <path d="M604.9 275.3L607.3 276.6L604.9 277.9Z"/>
    <path d="M604.7 352.6V359.4Q600.2 359.4 600.2 356Q600.2 352.6 604.7 352.6ZM605 350.3L607.6 352V359.8L605 361.5ZM608.1 352.2H610.7V359.6H608.1Z" fill="#d6d8dc"/>
    <path d="M707.8 347.2L702 357H706.3L705.3 364.5L711.6 354.6H707.3Z"/>
    <path d="M656.8 445.9H659.6L656.8 448.7Z"/><path d="M663 453H660.2L663 450.2Z"/>
  </g>
  <g fill="none" stroke="#fff">
    <path d="M117.3 517.4L120.3 520.4L123.4 517.2" stroke="#e6e7ea" stroke-width="1.5"/>
    <path d="M147.3 513.8L156 522.3M156 513.8L147.3 522.3" stroke="#4d515b" stroke-width="2"/>
    <path d="M203 518.4Q208.6 516.4 209.6 521.3" stroke="#fff" stroke-width="1.6"/><path d="M199.9 518.6L203.8 515.6L204 521.2Z" fill="#fff" stroke="none"/>
    <path d="M234.2 518.4Q228.6 516.4 227.6 521.3" stroke="#4f535d" stroke-width="1.6"/><path d="M237.3 518.6L233.4 515.6L233.2 521.2Z" fill="#4f535d" stroke="none"/>
    <path d="M501.3 508.8V527.4" stroke-width="2"/>
    <path d="M498.3 514.6L493.3 518.3L498.3 522Z" stroke-width="1.4" stroke-linejoin="round"/>
    <path d="M504.4 514.6L509.4 518.3L504.4 522Z" stroke-width="1.4" stroke-linejoin="round"/>
    <circle cx="530.1" cy="515.9" r="5.1" stroke-width="1.6"/>
    <path d="M527.8 515.9H532.4" stroke-width="1.5"/>
    <path d="M534.3 520.1L538.3 524.1" stroke-width="1.9" stroke-linecap="round"/>
    <circle cx="667.3" cy="516.3" r="5.1" stroke-width="1.6"/>
    <path d="M665 516.3H669.6M667.3 514V518.6" stroke-width="1.5"/>
    <path d="M671.5 520.5L675.5 524.5" stroke-width="1.9" stroke-linecap="round"/>
    <path d="M782.3 510L794 521.5M794 510L782.3 521.5" stroke-width="1.7" stroke-linecap="round"/>
  </g>
  <g fill="#5d70e6">
    <rect x="463.9" y="515.8" width="10.1" height="4.2" rx=".5"/>
    <rect x="476.6" y="515.8" width="10.1" height="4.2" rx=".5"/>
  </g>
  <g fill="#4a56a0"><circle cx="475.3" cy="511" r=".8"/><circle cx="475.3" cy="525" r=".8"/><circle cx="471.5" cy="512.5" r=".6"/><circle cx="479" cy="512.5" r=".6"/><circle cx="471.5" cy="523.5" r=".6"/><circle cx="479" cy="523.5" r=".6"/></g>
  <g fill="none" stroke="#fff" stroke-width="1.3">
    <path d="M314.2 418.3A4 4 0 0 1 319.5 413.3"/><path d="M321.6 415.5A4 4 0 0 1 316.3 420.5"/>
  </g>
  <g fill="#fff"><path d="M318.2 411.6L320.6 413.4L318.2 415.2Z"/><path d="M317.6 418.6L315.2 420.4L317.6 422.2Z"/></g>
  <g fill="#f2c94c">
    <path d="M684.6 353.3L685.3 355.6L687.6 356.4L685.3 357.2L684.6 359.5L683.9 357.2L681.6 356.4L683.9 355.6Z"/>
    <path d="M681.1 351.6L681.5 352.5L682.3 352.8L681.5 353.1L681.1 354L680.7 353.1L679.9 352.8L680.7 352.5Z"/>
    <path d="M679.5 357.5L679.9 358.4L680.7 358.7L679.9 359L679.5 359.9L679.1 359L678.3 358.7L679.1 358.4Z"/>
    <path d="M775 353.3L775.7 355.6L778 356.4L775.7 357.2L775 359.5L774.3 357.2L772 356.4L774.3 355.6Z"/>
    <path d="M771.5 351.6L771.9 352.5L772.7 352.8L771.9 353.1L771.5 354L771.1 353.1L770.3 352.8L771.1 352.5Z"/>
    <path d="M769.9 357.5L770.3 358.4L771.1 358.7L770.3 359L769.9 359.9L769.5 359L768.7 358.7L769.5 358.4Z"/>
  </g>
</svg>
</body></html>
